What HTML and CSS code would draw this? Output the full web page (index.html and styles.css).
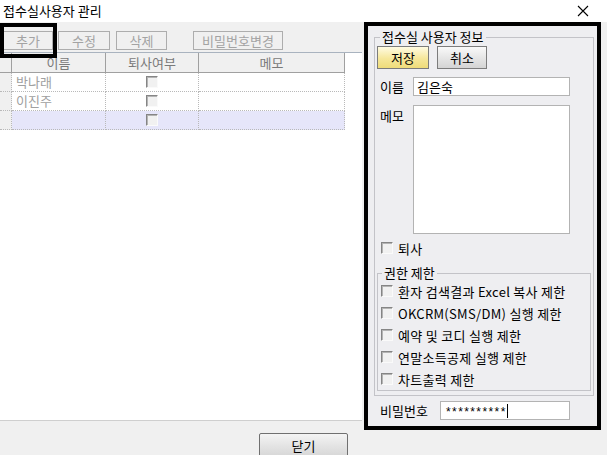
FILE: index.html
```html
<!DOCTYPE html>
<html>
<head>
    <meta charset="UTF-8">
    <title>접수실사용자 관리</title>
    <link rel="stylesheet" href="styles.css">
</head>
<body>
    <div class="window">
        <div class="titlebar">
            <span class="title">접수실사용자 관리</span>
            <svg class="close-x" width="12" height="12" viewBox="0 0 12 12">
                <path d="M1 1 L11 11 M11 1 L1 11" stroke="#000" stroke-width="1.1" fill="none"/>
            </svg>
        </div>

        <div class="content">
            <div class="left">
                <div class="toolbar">
                    <button class="tb-btn w-add">추가</button>
                    <button class="tb-btn w-edit">수정</button>
                    <button class="tb-btn w-del">삭제</button>
                    <button class="tb-btn w-pw">비밀번호변경</button>
                    <div class="focus-mark"></div>
                </div>

                <div class="grid">
                    <div class="grid-row grid-head">
                        <div class="cell c-hdr"></div>
                        <div class="cell c-name">이름</div>
                        <div class="cell c-quit">퇴사여부</div>
                        <div class="cell c-memo">메모</div>
                    </div>
                    <div class="grid-row">
                        <div class="cell c-hdr"></div>
                        <div class="cell c-name">박나래</div>
                        <div class="cell c-quit"><span class="cb"></span></div>
                        <div class="cell c-memo"></div>
                    </div>
                    <div class="grid-row">
                        <div class="cell c-hdr"></div>
                        <div class="cell c-name">이진주</div>
                        <div class="cell c-quit"><span class="cb"></span></div>
                        <div class="cell c-memo"></div>
                    </div>
                    <div class="grid-row row-new">
                        <div class="cell c-hdr"></div>
                        <div class="cell c-name"></div>
                        <div class="cell c-quit"><span class="cb"></span></div>
                        <div class="cell c-memo"></div>
                    </div>
                </div>
            </div>

            <div class="panel">
                <fieldset class="group info">
                    <legend>접수실 사용자 정보</legend>
                    <div class="btn-row">
                        <button class="btn btn-save">저장</button>
                        <button class="btn btn-cancel">취소</button>
                    </div>
                    <div class="field-row">
                        <span class="f-label">이름</span>
                        <div class="text-box w-name">김은숙</div>
                    </div>
                    <div class="field-row memo-row">
                        <span class="f-label memo-label">메모</span>
                        <div class="text-box w-memo"></div>
                    </div>
                    <div class="check-row quit-row">
                        <span class="cb"></span>
                        <span class="check-text">퇴사</span>
                    </div>
                    <fieldset class="group limits">
                        <legend>권한 제한</legend>
                        <div class="check-row">
                            <span class="cb"></span>
                            <span class="check-text">환자 검색결과 Excel 복사 제한</span>
                        </div>
                        <div class="check-row">
                            <span class="cb"></span>
                            <span class="check-text">OKCRM(SMS/DM) 실행 제한</span>
                        </div>
                        <div class="check-row">
                            <span class="cb"></span>
                            <span class="check-text">예약 및 코디 실행 제한</span>
                        </div>
                        <div class="check-row">
                            <span class="cb"></span>
                            <span class="check-text">연말소득공제 실행 제한</span>
                        </div>
                        <div class="check-row">
                            <span class="cb"></span>
                            <span class="check-text">차트출력 제한</span>
                        </div>
                    </fieldset>
                </fieldset>
                <div class="pw-row">
                    <span class="pw-label">비밀번호</span>
                    <div class="text-box w-pwbox"><span class="stars">**********</span><span class="caret"></span></div>
                </div>
            </div>
        </div>

        <div class="footer">
            <button class="close-btn">닫기</button>
        </div>
    </div>
</body>
</html>
```

FILE: styles.css
```css
body {
    margin: 0;
    font-family: "Noto Sans CJK KR", "Noto Sans", sans-serif;
    font-size: 13px;
    color: #000;
}

.window {
    width: 607px;
    height: 455px;
    overflow: hidden;
    background-color: #f0f0f0;
}

.titlebar {
    height: 22px;
    background-color: #fff;
    display: flex;
    align-items: center;
    justify-content: space-between;
    padding: 0 18px 0 3px;
}

.title {
    font-size: 13px;
    line-height: 16px;
}

.content {
    display: flex;
    align-items: flex-start;
    height: 408px;
}

.left {
    width: 363px;
}

/* toolbar */
.toolbar {
    position: relative;
    height: 30px;
    box-sizing: border-box;
    display: flex;
    align-items: flex-start;
    padding: 9px 0 0 3px;
}

.tb-btn {
    height: 19px;
    padding: 0;
    box-sizing: border-box;
    border: 1px solid #adadad;
    background-color: #f0f0f0;
    color: #a3a3a3;
    font: inherit;
    line-height: 16px;
}

.w-add { width: 50px; }
.w-edit { width: 52px; margin-left: 5px; }
.w-del { width: 51px; margin-left: 6px; }
.w-pw { width: 90px; margin-left: 26px; }

.focus-mark {
    position: absolute;
    left: 0;
    top: 1px;
    width: 57px;
    height: 35px;
    box-sizing: border-box;
    border: 4px solid #000;
    z-index: 2;
}

/* grid */
.grid {
    width: 362px;
    height: 369px;
    box-sizing: border-box;
    background-color: #fff;
    border-top: 1px solid #a9b3bf;
    border-bottom: 1px solid #cfcfcf;
}

.grid-row {
    display: flex;
    height: 19px;
}

.cell {
    box-sizing: border-box;
    height: 100%;
    border-right: 1px dotted #b9b9b9;
    border-bottom: 1px dotted #b9b9b9;
    line-height: 18px;
    color: #a0a0a0;
    display: flex;
    align-items: center;
}

.c-hdr { width: 12px; background-color: #f0f0f0; }
.c-name { width: 94px; padding-left: 4px; }
.c-quit { width: 93px; justify-content: center; }
.c-memo { width: 146px; }

.grid-head {
    height: 20px;
}

.grid-head .cell {
    background-color: #f0f0f0;
    border-right: 1px solid #a0a0a0;
    border-bottom: 1px solid #a0a0a0;
    color: #7a7a7a;
    justify-content: center;
    padding-left: 0;
}

.row-new .cell {
    background-color: #e6e6fa;
}

.row-new .c-hdr {
    background-color: #f0f0f0;
}

.cb {
    display: inline-block;
    width: 12px;
    height: 12px;
    box-sizing: border-box;
    border: 1px solid;
    border-color: #858585 #fafafa #fafafa #858585;
    box-shadow: inset 1px 1px 0 #b4b4b4;
    background-color: #f1f1f1;
}

/* right panel */
.panel {
    margin-left: 1px;
    width: 237px;
    height: 408px;
    box-sizing: border-box;
    border: 4px solid #000;
    background-color: #eeeef1;
    padding: 4px 3px 0 6px;
}

.group {
    margin: 0;
    min-width: 0;
    border: 1px solid #c3c3c8;
}

.group legend {
    padding: 0 2px;
    line-height: 14px;
    height: 14px;
}

.info {
    padding: 0 2px 4px 2px;
}

.info legend {
    margin-left: 3px;
}

.btn-row {
    display: flex;
    margin-top: 2px;
}

.btn {
    height: 23px;
    padding: 0;
    box-sizing: border-box;
    font: inherit;
    line-height: 20px;
    color: #000;
    border: 1px solid #7c7c7c;
}

.btn-save {
    width: 52px;
    background: linear-gradient(#fffbe2, #f6e79a 55%, #efdc7a);
}

.btn-cancel {
    width: 50px;
    margin-left: 8px;
    background: linear-gradient(#f9f9f9, #e6e6e6 50%, #d4d4d4);
}

.field-row {
    display: flex;
    align-items: center;
    margin-top: 8px;
}

.f-label {
    width: 33px;
    padding-left: 3px;
    line-height: 15px;
}

.text-box {
    box-sizing: border-box;
    height: 19px;
    background-color: #fff;
    border: 1px solid #b3b3b3;
    padding-left: 3px;
    line-height: 17px;
    display: flex;
    align-items: center;
}

.w-name { width: 157px; }

.memo-row {
    align-items: flex-start;
    margin-top: 9px;
}

.memo-label {
    margin-top: 3px;
}

.w-memo {
    width: 157px;
    height: 129px;
}

.check-row {
    display: flex;
    align-items: center;
    height: 22px;
}

.check-row .cb {
    margin-left: 3px;
}

.check-text {
    margin-left: 5px;
    line-height: 15px;
    letter-spacing: 0.3px;
}

.quit-row {
    margin-top: 2px;
    height: 24px;
}

.quit-row .cb {
    margin-left: 4px;
}

.limits {
    margin-top: 6px;
    padding: 0;
}

.limits legend {
    margin-left: 4px;
}

.pw-row {
    display: flex;
    align-items: center;
    margin-top: 5px;
}

.pw-label {
    width: 60px;
    padding-left: 6px;
    line-height: 15px;
}

.w-pwbox {
    width: 130px;
    padding-left: 5px;
}

.stars {
    font-family: "Liberation Sans", sans-serif;
    font-size: 12px;
    letter-spacing: 1.4px;
    line-height: 14px;
    padding-top: 3px;
}

.caret {
    display: inline-block;
    width: 1px;
    height: 14px;
    background-color: #000;
}

/* footer */
.footer {
    display: flex;
    padding-left: 259px;
    margin-top: 3px;
}

.close-btn {
    width: 89px;
    height: 25px;
    padding: 0;
    box-sizing: border-box;
    border: 1px solid #707070;
    border-radius: 2px;
    background: linear-gradient(#f4f4f4, #e4e4e4 50%, #d6d6d6);
    font: inherit;
    line-height: 20px;
    color: #000;
}
```
